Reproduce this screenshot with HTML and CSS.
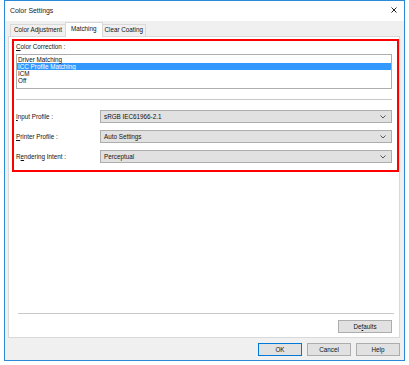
FILE: index.html
```html
<!DOCTYPE html>
<html lang="en">
<head>
    <meta charset="UTF-8">
    <meta name="viewport" content="width=device-width, initial-scale=1.0">
    <title>Color Settings</title>
    <link rel="stylesheet" href="styles.css">
</head>
<body>
    <div class="window">
        <div class="titlebar">
            <span class="title">Color Settings</span>
            <svg class="close" width="6" height="6" viewBox="0 0 6 6">
                <path d="M0.5 0.5 L5.5 5.5 M5.5 0.5 L0.5 5.5" stroke="#222" stroke-width="1"/>
            </svg>
        </div>

        <div class="client">
            <ul class="tabs">
                <li class="tab">Color Adjustment</li>
                <li class="tab active">Matching</li>
                <li class="tab">Clear Coating</li>
            </ul>

            <div class="panel">
                <div class="highlight">
                    <div class="label"><u>C</u>olor Correction :</div>
                    <ul class="listbox">
                        <li>Driver Matching</li>
                        <li class="selected">ICC Profile Matching</li>
                        <li>ICM</li>
                        <li>Off</li>
                    </ul>

                    <hr class="sep">

                    <div class="row">
                        <span class="row-label"><u>I</u>nput Profile :</span>
                        <div class="select">
                            <span>sRGB IEC61966-2.1</span>
                            <svg width="6" height="4" viewBox="0 0 6 4"><path d="M0.5 0.5 L3 3 L5.5 0.5" fill="none" stroke="#555" stroke-width="1"/></svg>
                        </div>
                    </div>
                    <div class="row">
                        <span class="row-label"><u>P</u>rinter Profile :</span>
                        <div class="select">
                            <span>Auto Settings</span>
                            <svg width="6" height="4" viewBox="0 0 6 4"><path d="M0.5 0.5 L3 3 L5.5 0.5" fill="none" stroke="#555" stroke-width="1"/></svg>
                        </div>
                    </div>
                    <div class="row">
                        <span class="row-label">R<u>e</u>ndering Intent :</span>
                        <div class="select">
                            <span>Perceptual</span>
                            <svg width="6" height="4" viewBox="0 0 6 4"><path d="M0.5 0.5 L3 3 L5.5 0.5" fill="none" stroke="#555" stroke-width="1"/></svg>
                        </div>
                    </div>
                </div>

                <div class="spacer"></div>

                <hr class="sep bottom-sep">
                <div class="panel-buttons">
                    <button class="btn">De<u>f</u>aults</button>
                </div>
            </div>

            <div class="dialog-buttons">
                <button class="btn default">OK</button>
                <button class="btn">Cancel</button>
                <button class="btn">Help</button>
            </div>
        </div>
    </div>
</body>
</html>
```

FILE: styles.css
```css
/* Reset styles */
* {
    margin: 0;
    padding: 0;
    box-sizing: border-box;
}

body {
    font-family: "Liberation Sans", Arial, sans-serif;
    font-size: 6.3px;
    color: #111;
    background-color: #fff;
}

u {
    text-decoration: underline;
}

/* Window frame */
.window {
    margin-left: 4px;
    width: 401px;
    height: 361px;
    border: 1px solid #2b8ad8;
    display: flex;
    flex-direction: column;
    background-color: #f0f0f0;
}

.titlebar {
    height: 20px;
    background-color: #fff;
    display: flex;
    align-items: center;
    justify-content: space-between;
    padding: 0 7px 1px 5px;
}

.title {
    font-size: 6.9px;
    color: #222;
}

.close {
    display: block;
    margin-top: -2px;
}

.client {
    flex: 1;
    display: flex;
    flex-direction: column;
    padding: 1px 4px 0 3px;
}

/* Tabs */
.tabs {
    list-style: none;
    display: flex;
    height: 14px;
    padding-left: 2px;
    align-items: flex-end;
}

.tab {
    height: 12px;
    line-height: 10px;
    padding: 0 3px;
    border: 1px solid #d9d9d9;
    border-bottom: none;
    background-color: #f0f0f0;
    margin-right: -1px;
}

.tab:last-child {
    padding: 0 2px;
}

.tab.active {
    height: 15px;
    line-height: 12px;
    background-color: #fff;
    padding: 0 5px;
    position: relative;
    z-index: 1;
    margin-bottom: -1px;
}

/* Main panel */
.panel {
    height: 302px;
    background-color: #fff;
    border: 1px solid #d9d9d9;
    display: flex;
    flex-direction: column;
    padding: 2px 0 0 3px;
}

.highlight {
    border: 2px solid #f00;
    padding: 2px 5px 7px 2px;
}

.label {
    line-height: 8px;
    margin-bottom: 3px;
}

.listbox {
    list-style: none;
    height: 35px;
    border: 1px solid #adadad;
    padding-top: 1px;
}

.listbox li {
    height: 7px;
    line-height: 7px;
    padding-left: 1px;
}

.listbox li.selected {
    background-color: #3399ff;
    color: #fff;
}

.sep {
    border: none;
    border-top: 1px solid #c8c8c8;
    margin: 10px 0 10px;
}

.row {
    display: flex;
    align-items: center;
    margin-bottom: 7px;
}

.row:last-child {
    margin-bottom: 0;
}

.row-label {
    width: 84px;
}

.select {
    flex: 1;
    height: 13px;
    border: 1px solid #adadad;
    background-color: #e1e1e1;
    display: flex;
    align-items: center;
    justify-content: space-between;
    padding: 0 5px 0 3px;
}

.select svg {
    display: block;
}

.spacer {
    flex: 1;
}

.bottom-sep {
    margin: 0 5px 6px 6px;
}

.panel-buttons {
    display: flex;
    justify-content: flex-end;
    padding-right: 7px;
    margin-bottom: 4px;
}

/* Buttons */
.btn {
    font-family: "Liberation Sans", Arial, sans-serif;
    font-size: 6.3px;
    color: #111;
    width: 44px;
    height: 13px;
    border: 1px solid #adadad;
    background-color: #e1e1e1;
}

.panel-buttons .btn {
    width: 54px;
}

.btn.default {
    border-color: #0078d7;
}

.dialog-buttons {
    display: flex;
    justify-content: flex-end;
    gap: 5px;
    padding: 5px 0 0;
}
```
